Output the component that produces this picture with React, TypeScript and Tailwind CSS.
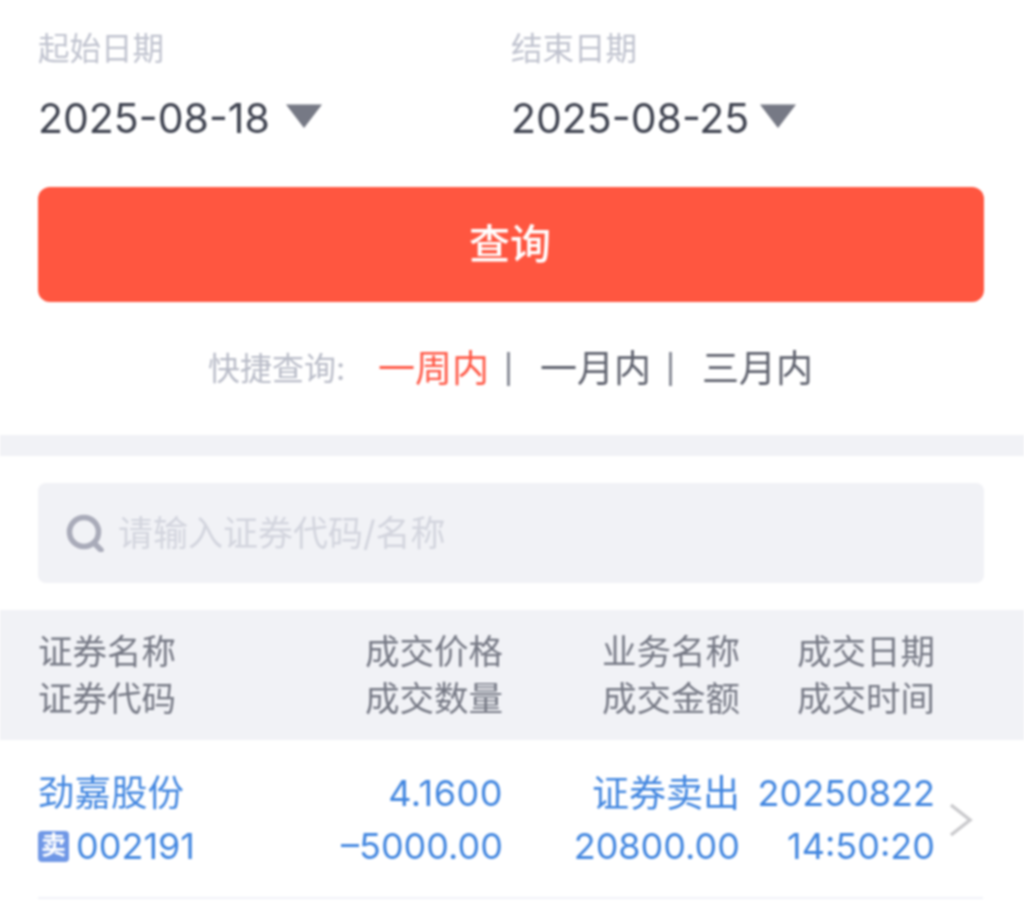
const FONT = 'font-["Inter","Noto_Sans_CJK_SC",sans-serif]';

function DateField({ label, value, gap, className }: { label: string; value: string; gap: string; className?: string }) {
  return (
    <div className={className}>
      <p className="text-[31.5px] leading-[40px] text-[#c0c3cf]">{label}</p>
      <div className="mt-[23px] flex items-center">
        <span className="text-[41px] leading-[52px] text-[#3f4350]">{value}</span>
        <svg width="38" height="24" viewBox="0 0 38 24" className={`${gap} mt-[-4px]`}>
          <path d="M1 0.5h36L19 24z" fill="#767985" />
        </svg>
      </div>
    </div>
  );
}

function HeaderCell({ top, bottom, className }: { top: string; bottom: string; className: string }) {
  return (
    <div className={className}>
      <p className="leading-[47px]">{top}</p>
      <p className="leading-[47px]">{bottom}</p>
    </div>
  );
}

export default function App() {
  return (
    <div className={`${FONT} h-[921px] w-[1024px] overflow-hidden bg-white blur-[0.9px]`}>
      <section className="px-[38px] pt-[29px]">
        <div className="flex">
          <DateField label="起始日期" value="2025-08-18" gap="ml-[15px]" className="w-[473px]" />
          <DateField label="结束日期" value="2025-08-25" gap="ml-[10px]" />
        </div>
        <button
          type="button"
          className="mt-[43px] flex h-[115px] w-[946px] items-center justify-center rounded-[12px] bg-[#ff5640] pr-[2px] text-[41px] font-medium text-white"
        >
          查询
        </button>
        <div className="mt-[42px] flex h-[50px] items-center pl-[170px]">
          <span className="w-[170px] text-[32px] text-[#b9bcc8]">快捷查询:</span>
          <span className="text-[37px] text-[#ff5a48]">一周内</span>
          <span className="ml-[18px] h-[34px] w-[3px] bg-[#8b8e99]" />
          <span className="ml-[30px] text-[37px] text-[#5f626e]">一月内</span>
          <span className="ml-[18px] h-[34px] w-[3px] bg-[#8b8e99]" />
          <span className="ml-[30px] text-[37px] text-[#5f626e]">三月内</span>
        </div>
      </section>

      <div className="mt-[41px] h-[21px] bg-[#f1f2f6]" />

      <div className="ml-[38px] mr-[40px] mt-[27px] flex h-[100px] items-center rounded-[8px] bg-[#f1f2f6] pl-[28px]">
        <svg width="38" height="38" viewBox="0 0 38 38" fill="none" stroke="#a9abb9" strokeWidth="5.5">
          <circle cx="18" cy="18" r="14.5" />
          <path d="M28 29l7 7" strokeLinecap="round" />
        </svg>
        <span className="ml-[14px] text-[35px] text-[#d3d5de]">请输入证券代码/名称</span>
      </div>

      <div className="mt-[27px] flex h-[130px] items-center bg-[#f1f2f6] pl-[38px] text-[34.5px] text-[#767985]">
        <HeaderCell top="证券名称" bottom="证券代码" className="w-[201px]" />
        <HeaderCell top="成交价格" bottom="成交数量" className="w-[264px] text-right" />
        <HeaderCell top="业务名称" bottom="成交金额" className="w-[237px] text-right" />
        <HeaderCell top="成交日期" bottom="成交时间" className="w-[195px] text-right" />
      </div>

      <div className="ml-[38px] mr-[41px] flex h-[159px] items-center border-b-[2px] border-[#f1f2f8] pt-[2px] text-[36px] text-[#4387e0]">
        <div className="w-[201px]">
          <p className="text-[36.5px] leading-[53px]">劲嘉股份</p>
          <div className="flex h-[53px] items-center gap-[7px]">
            <span className="flex h-[31px] w-[31px] items-center justify-center rounded-[4px] bg-[#6f97e6] text-[25px] font-bold text-white">
              卖
            </span>
            <span>002191</span>
          </div>
        </div>
        <div className="w-[264px] text-right">
          <p className="leading-[53px] tracking-[0.5px]">4.1600</p>
          <p className="leading-[53px]">–5000.00</p>
        </div>
        <div className="w-[237px] text-right">
          <p className="text-[37px] leading-[53px]">证券卖出</p>
          <p className="leading-[53px]">20800.00</p>
        </div>
        <div className="w-[195px] text-right">
          <p className="leading-[53px]">20250822</p>
          <p className="leading-[53px]">14:50:20</p>
        </div>
        <svg width="24" height="34" viewBox="0 0 24 34" fill="none" stroke="#cacacd" strokeWidth="3.5" className="ml-[14px]">
          <path d="M2 2l19 15L2 32" />
        </svg>
      </div>
    </div>
  );
}
